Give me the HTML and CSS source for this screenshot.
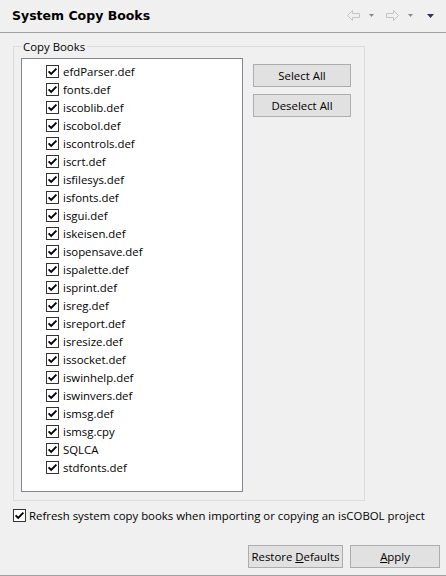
FILE: index.html
```html
<!DOCTYPE html>
<html>
<head>
<meta charset="utf-8">
<link rel="stylesheet" href="styles.css">
</head>
<body>
<div class="page">
  <div class="header">
    <div class="title">System Copy Books</div>
    <div class="nav">
      <svg class="arrow" width="13" height="11" viewBox="0 0 13 11"><path d="M5.5 0.5 L0.5 5.5 L5.5 10.5 L5.5 7.5 L12.5 7.5 L12.5 3.5 L5.5 3.5 Z" fill="none" stroke="#c4c4c4" stroke-width="1"/></svg>
      <svg class="tri" width="5" height="3" viewBox="0 0 5 3"><path d="M0 0 H5 L2.5 3 Z" fill="#8a8a8a"/></svg>
      <svg class="arrow" width="13" height="11" viewBox="0 0 13 11"><path d="M7.5 0.5 L12.5 5.5 L7.5 10.5 L7.5 7.5 L0.5 7.5 L0.5 3.5 L7.5 3.5 Z" fill="none" stroke="#c4c4c4" stroke-width="1"/></svg>
      <svg class="tri" width="5" height="3" viewBox="0 0 5 3"><path d="M0 0 H5 L2.5 3 Z" fill="#8a8a8a"/></svg>
      <svg class="tri dark" width="7" height="4" viewBox="0 0 7 4"><path d="M0 0 H7 L3.5 4 Z" fill="#3b2a5c"/></svg>
    </div>
  </div>

  <div class="content">
    <fieldset class="group">
      <legend class="legend">Copy Books</legend>
      <div class="group-body">
        <div class="list">
          <div class="item"><svg class="cb" width="13" height="13" viewBox="0 0 13 13"><rect x="0.5" y="0.5" width="12" height="12" fill="#fff" stroke="#333"/><path d="M2.6 6.4 L5.2 9 L10.4 3.6" fill="none" stroke="#000" stroke-width="1.9"/></svg><span>efdParser.def</span></div>
          <div class="item"><svg class="cb" width="13" height="13" viewBox="0 0 13 13"><rect x="0.5" y="0.5" width="12" height="12" fill="#fff" stroke="#333"/><path d="M2.6 6.4 L5.2 9 L10.4 3.6" fill="none" stroke="#000" stroke-width="1.9"/></svg><span>fonts.def</span></div>
          <div class="item"><svg class="cb" width="13" height="13" viewBox="0 0 13 13"><rect x="0.5" y="0.5" width="12" height="12" fill="#fff" stroke="#333"/><path d="M2.6 6.4 L5.2 9 L10.4 3.6" fill="none" stroke="#000" stroke-width="1.9"/></svg><span>iscoblib.def</span></div>
          <div class="item"><svg class="cb" width="13" height="13" viewBox="0 0 13 13"><rect x="0.5" y="0.5" width="12" height="12" fill="#fff" stroke="#333"/><path d="M2.6 6.4 L5.2 9 L10.4 3.6" fill="none" stroke="#000" stroke-width="1.9"/></svg><span>iscobol.def</span></div>
          <div class="item"><svg class="cb" width="13" height="13" viewBox="0 0 13 13"><rect x="0.5" y="0.5" width="12" height="12" fill="#fff" stroke="#333"/><path d="M2.6 6.4 L5.2 9 L10.4 3.6" fill="none" stroke="#000" stroke-width="1.9"/></svg><span>iscontrols.def</span></div>
          <div class="item"><svg class="cb" width="13" height="13" viewBox="0 0 13 13"><rect x="0.5" y="0.5" width="12" height="12" fill="#fff" stroke="#333"/><path d="M2.6 6.4 L5.2 9 L10.4 3.6" fill="none" stroke="#000" stroke-width="1.9"/></svg><span>iscrt.def</span></div>
          <div class="item"><svg class="cb" width="13" height="13" viewBox="0 0 13 13"><rect x="0.5" y="0.5" width="12" height="12" fill="#fff" stroke="#333"/><path d="M2.6 6.4 L5.2 9 L10.4 3.6" fill="none" stroke="#000" stroke-width="1.9"/></svg><span>isfilesys.def</span></div>
          <div class="item"><svg class="cb" width="13" height="13" viewBox="0 0 13 13"><rect x="0.5" y="0.5" width="12" height="12" fill="#fff" stroke="#333"/><path d="M2.6 6.4 L5.2 9 L10.4 3.6" fill="none" stroke="#000" stroke-width="1.9"/></svg><span>isfonts.def</span></div>
          <div class="item"><svg class="cb" width="13" height="13" viewBox="0 0 13 13"><rect x="0.5" y="0.5" width="12" height="12" fill="#fff" stroke="#333"/><path d="M2.6 6.4 L5.2 9 L10.4 3.6" fill="none" stroke="#000" stroke-width="1.9"/></svg><span>isgui.def</span></div>
          <div class="item"><svg class="cb" width="13" height="13" viewBox="0 0 13 13"><rect x="0.5" y="0.5" width="12" height="12" fill="#fff" stroke="#333"/><path d="M2.6 6.4 L5.2 9 L10.4 3.6" fill="none" stroke="#000" stroke-width="1.9"/></svg><span>iskeisen.def</span></div>
          <div class="item"><svg class="cb" width="13" height="13" viewBox="0 0 13 13"><rect x="0.5" y="0.5" width="12" height="12" fill="#fff" stroke="#333"/><path d="M2.6 6.4 L5.2 9 L10.4 3.6" fill="none" stroke="#000" stroke-width="1.9"/></svg><span>isopensave.def</span></div>
          <div class="item"><svg class="cb" width="13" height="13" viewBox="0 0 13 13"><rect x="0.5" y="0.5" width="12" height="12" fill="#fff" stroke="#333"/><path d="M2.6 6.4 L5.2 9 L10.4 3.6" fill="none" stroke="#000" stroke-width="1.9"/></svg><span>ispalette.def</span></div>
          <div class="item"><svg class="cb" width="13" height="13" viewBox="0 0 13 13"><rect x="0.5" y="0.5" width="12" height="12" fill="#fff" stroke="#333"/><path d="M2.6 6.4 L5.2 9 L10.4 3.6" fill="none" stroke="#000" stroke-width="1.9"/></svg><span>isprint.def</span></div>
          <div class="item"><svg class="cb" width="13" height="13" viewBox="0 0 13 13"><rect x="0.5" y="0.5" width="12" height="12" fill="#fff" stroke="#333"/><path d="M2.6 6.4 L5.2 9 L10.4 3.6" fill="none" stroke="#000" stroke-width="1.9"/></svg><span>isreg.def</span></div>
          <div class="item"><svg class="cb" width="13" height="13" viewBox="0 0 13 13"><rect x="0.5" y="0.5" width="12" height="12" fill="#fff" stroke="#333"/><path d="M2.6 6.4 L5.2 9 L10.4 3.6" fill="none" stroke="#000" stroke-width="1.9"/></svg><span>isreport.def</span></div>
          <div class="item"><svg class="cb" width="13" height="13" viewBox="0 0 13 13"><rect x="0.5" y="0.5" width="12" height="12" fill="#fff" stroke="#333"/><path d="M2.6 6.4 L5.2 9 L10.4 3.6" fill="none" stroke="#000" stroke-width="1.9"/></svg><span>isresize.def</span></div>
          <div class="item"><svg class="cb" width="13" height="13" viewBox="0 0 13 13"><rect x="0.5" y="0.5" width="12" height="12" fill="#fff" stroke="#333"/><path d="M2.6 6.4 L5.2 9 L10.4 3.6" fill="none" stroke="#000" stroke-width="1.9"/></svg><span>issocket.def</span></div>
          <div class="item"><svg class="cb" width="13" height="13" viewBox="0 0 13 13"><rect x="0.5" y="0.5" width="12" height="12" fill="#fff" stroke="#333"/><path d="M2.6 6.4 L5.2 9 L10.4 3.6" fill="none" stroke="#000" stroke-width="1.9"/></svg><span>iswinhelp.def</span></div>
          <div class="item"><svg class="cb" width="13" height="13" viewBox="0 0 13 13"><rect x="0.5" y="0.5" width="12" height="12" fill="#fff" stroke="#333"/><path d="M2.6 6.4 L5.2 9 L10.4 3.6" fill="none" stroke="#000" stroke-width="1.9"/></svg><span>iswinvers.def</span></div>
          <div class="item"><svg class="cb" width="13" height="13" viewBox="0 0 13 13"><rect x="0.5" y="0.5" width="12" height="12" fill="#fff" stroke="#333"/><path d="M2.6 6.4 L5.2 9 L10.4 3.6" fill="none" stroke="#000" stroke-width="1.9"/></svg><span>ismsg.def</span></div>
          <div class="item"><svg class="cb" width="13" height="13" viewBox="0 0 13 13"><rect x="0.5" y="0.5" width="12" height="12" fill="#fff" stroke="#333"/><path d="M2.6 6.4 L5.2 9 L10.4 3.6" fill="none" stroke="#000" stroke-width="1.9"/></svg><span>ismsg.cpy</span></div>
          <div class="item"><svg class="cb" width="13" height="13" viewBox="0 0 13 13"><rect x="0.5" y="0.5" width="12" height="12" fill="#fff" stroke="#333"/><path d="M2.6 6.4 L5.2 9 L10.4 3.6" fill="none" stroke="#000" stroke-width="1.9"/></svg><span>SQLCA</span></div>
          <div class="item"><svg class="cb" width="13" height="13" viewBox="0 0 13 13"><rect x="0.5" y="0.5" width="12" height="12" fill="#fff" stroke="#333"/><path d="M2.6 6.4 L5.2 9 L10.4 3.6" fill="none" stroke="#000" stroke-width="1.9"/></svg><span>stdfonts.def</span></div>
        </div>
        <div class="side-buttons">
          <button class="btn side">Select All</button>
          <button class="btn side">Deselect All</button>
        </div>
      </div>
    </fieldset>

    <div class="refresh">
      <svg class="cb" width="13" height="13" viewBox="0 0 13 13"><rect x="0.5" y="0.5" width="12" height="12" fill="#fff" stroke="#333"/><path d="M2.6 6.4 L5.2 9 L10.4 3.6" fill="none" stroke="#000" stroke-width="1.9"/></svg>
      <span>Refresh system copy books when importing or copying an isCOBOL project</span>
    </div>
  </div>

  <div class="footer">
    <button class="btn restore"><span>Restore <u>D</u>efaults</span></button>
    <button class="btn apply"><span><u>A</u>pply</span></button>
  </div>
</div>
</body>
</html>
```

FILE: styles.css
```css
* { box-sizing: border-box; }

html, body {
  margin: 0;
  padding: 0;
  background: #f0f0f0;
}

body {
  font-family: "Open Sans", "Liberation Sans", sans-serif;
  font-size: 11.4px;
  color: #000;
}

.page {
  width: 446px;
  height: 576px;
  display: flex;
  flex-direction: column;
  border-bottom: 1px solid #a0a0a0;
}

.header {
  height: 33px;
  border-bottom: 1px solid #a0a0a0;
  display: flex;
  align-items: center;
  justify-content: space-between;
  padding: 0 12px 1px 12px;
}

.title {
  font-family: "DejaVu Sans", sans-serif;
  font-weight: bold;
  font-size: 12.5px;
  color: #000;
}

.nav {
  display: flex;
  align-items: center;
}

.nav svg { display: block; }
.nav svg:nth-child(1) { margin-right: 9px; }
.nav svg:nth-child(2) { margin-right: 12px; }
.nav svg:nth-child(3) { margin-right: 9px; }
.nav svg:nth-child(4) { margin-right: 14px; }

.content {
  padding: 6px 0 0 13px;
}

.group {
  width: 352px;
  margin: 0;
  padding: 4px 7px 8px 7px;
  border: 1px solid #dcdcdc;
}

.legend {
  padding: 0 2px;
  margin-left: 0;
  line-height: 15px;
  color: #000;
}

.group-body {
  display: flex;
  align-items: flex-start;
  gap: 10px;
}

.list {
  width: 222px;
  height: 434px;
  background: #fff;
  border: 1px solid #828790;
  padding: 3px 0 0 24px;
}

.item {
  height: 18px;
  display: flex;
  align-items: center;
  gap: 4px;
  white-space: nowrap;
}

.cb {
  display: block;
  flex: none;
}

.side-buttons {
  display: flex;
  flex-direction: column;
  gap: 7px;
  margin-top: 6px;
}

.btn {
  font-family: "Open Sans", "Liberation Sans", sans-serif;
  font-size: 11.4px;
  color: #000;
  background: #e1e1e1;
  border: 1px solid #adadad;
  border-radius: 0;
  padding: 0;
  height: 23px;
  display: flex;
  align-items: center;
  justify-content: center;
  white-space: nowrap;
}

.btn u { text-decoration: underline; }

.side { width: 98px; }

.refresh {
  display: flex;
  align-items: center;
  gap: 3px;
  margin-top: 7px;
  height: 15px;
  white-space: nowrap;
}

.footer {
  margin-top: auto;
  display: flex;
  justify-content: flex-end;
  gap: 7px;
  padding: 0 6px 7px 0;
}

.restore { width: 95px; }
.apply { width: 90px; }
```
